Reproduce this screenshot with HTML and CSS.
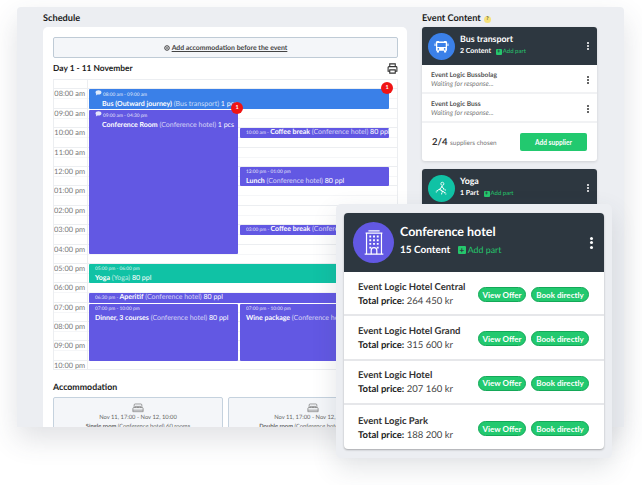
FILE: index.html
```html
<!DOCTYPE html>
<html lang="en">
  <head>
    <meta charset="UTF-8" />
    <meta name="viewport" content="width=device-width, initial-scale=1.0" />
    <title>Event schedule</title>
    <link rel="stylesheet" href="styles.css">
  </head>
  <body>
    <div class="frame">
      <div class="left-col">
        <h2 class="col-title">Schedule</h2>
        <div class="panel">
          <div class="add-box">
            <svg class="add-icon" viewBox="0 0 10 10"><circle cx="5" cy="5" r="3.8" fill="none" stroke="#333" stroke-width="1.6"/><path d="M5 3.4v3.2M3.4 5h3.2" stroke="#333" stroke-width="1"/></svg>
            <span>Add accommodation before the event</span>
          </div>
          <div class="day-row">
            <h3>Day 1 - 11 November</h3>
            <svg class="print-icon" viewBox="0 0 12 12"><path d="M3 4V1h6v3M3 9H1.2V5a1 1 0 0 1 1-1h7.6a1 1 0 0 1 1 1v4H9M3 7.5h6V11H3z" fill="none" stroke="#333" stroke-width="1.2"/></svg>
          </div>

          <div class="calendar">
            <div class="cal-top"></div>
            <div class="hour"><span>08:00 am</span></div>
            <div class="hour"><span>09:00 am</span></div>
            <div class="hour"><span>10:00 am</span></div>
            <div class="hour"><span>11:00 am</span></div>
            <div class="hour"><span>12:00 pm</span></div>
            <div class="hour"><span>01:00 pm</span></div>
            <div class="hour"><span>02:00 pm</span></div>
            <div class="hour"><span>03:00 pm</span></div>
            <div class="hour"><span>04:00 pm</span></div>
            <div class="hour"><span>05:00 pm</span></div>
            <div class="hour"><span>06:00 pm</span></div>
            <div class="hour"><span>07:00 pm</span></div>
            <div class="hour"><span>08:00 pm</span></div>
            <div class="hour"><span>09:00 pm</span></div>
            <div class="hour last"><span>10:00 pm</span></div>

            <div class="events">
              <div class="event blue ev-bus">
                <p class="ev-time"><svg class="chat" viewBox="0 0 10 9"><path d="M5 .5c2.6 0 4.500 1.400 4.500 3.200S7.600 6.900 5 6.900c-.5 0-1 0-1.400-.2L1 8.300l.7-2.300C1 5.400.5 4.600.5 3.700.5 1.900 2.400.5 5 .5z" fill="#fff"/></svg>08:00 am - 09:00 am</p>
                <p class="ev-name indent"><b>Bus (Outward journey)</b> <i>(Bus transport)</i> 1 pcs</p>
              </div>
              <div class="event purple ev-room">
                <p class="ev-time"><svg class="chat" viewBox="0 0 10 9"><path d="M5 .5c2.6 0 4.500 1.400 4.500 3.200S7.600 6.900 5 6.900c-.5 0-1 0-1.400-.2L1 8.300l.7-2.300C1 5.400.5 4.600.5 3.700.5 1.900 2.400.5 5 .5z" fill="#fff"/></svg>09:00 am - 04:30 pm</p>
                <p class="ev-name indent"><b>Conference Room</b> <i>(Conference hotel)</i> 1 pcs</p>
              </div>
              <div class="event purple one-line ev-coffee1">
                <span class="ev-time">10:00 am - </span><b>Coffee break</b> <i>(Conference hotel)</i> 80 ppl
              </div>
              <div class="event purple ev-lunch">
                <p class="ev-time">12:00 pm - 01:00 pm</p>
                <p class="ev-name"><b>Lunch</b> <i>(Conference hotel)</i> 80 ppl</p>
              </div>
              <div class="event purple one-line ev-coffee2">
                <span class="ev-time">03:00 pm - </span><b>Coffee break</b> <i>(Conference hotel)</i> 80 ppl
              </div>
              <div class="event teal ev-yoga">
                <p class="ev-time">05:00 pm - 06:00 pm</p>
                <p class="ev-name"><b>Yoga</b> <i>(Yoga)</i> 80 ppl</p>
              </div>
              <div class="event purple one-line ev-aperitif">
                <span class="ev-time">06:30 pm - </span><b>Aperitif</b> <i>(Conference hotel)</i> 80 ppl
              </div>
              <div class="event purple ev-dinner">
                <p class="ev-time">07:00 pm - 10:00 pm</p>
                <p class="ev-name"><b>Dinner, 3 courses</b> <i>(Conference hotel)</i> 80 ppl</p>
              </div>
              <div class="event purple ev-wine">
                <p class="ev-time">07:00 pm - 10:00 pm</p>
                <p class="ev-name"><b>Wine package</b> <i>(Conference hotel)</i> 80 ppl</p>
              </div>
            </div>
            <span class="badge badge-bus">1</span>
            <span class="badge badge-room">1</span>
          </div>

          <h3 class="acc-title">Accommodation</h3>
          <div class="acc-row">
            <div class="acc-card">
              <svg class="bed" viewBox="0 0 14 11"><path d="M2.5 5V2a1.200 1.200 0 0 1 1.200-1.200h6.600A1.200 1.200 0 0 1 11.500 2v3M1 8V6.200A1.200 1.200 0 0 1 2.200 5h9.600A1.200 1.200 0 0 1 13 6.200V8M1 8h12v1.800H1zM4 5V3.600h2.500V5M7.500 5V3.600H10V5" fill="none" stroke="#666" stroke-width=".7"/></svg>
              <p>Nov 11, 17:00 - Nov 12, 10:00</p>
              <p><b>Single room</b> (Conference hotel) 60 rooms</p>
            </div>
            <div class="acc-card">
              <svg class="bed" viewBox="0 0 14 11"><path d="M2.5 5V2a1.200 1.200 0 0 1 1.200-1.200h6.600A1.200 1.200 0 0 1 11.500 2v3M1 8V6.200A1.200 1.200 0 0 1 2.200 5h9.600A1.200 1.200 0 0 1 13 6.200V8M1 8h12v1.800H1zM4 5V3.600h2.500V5M7.500 5V3.600H10V5" fill="none" stroke="#666" stroke-width=".7"/></svg>
              <p>Nov 11, 17:00 - Nov 12, 10:00</p>
              <p><b>Double room</b> (Conference hotel) 20 rooms</p>
            </div>
          </div>
        </div>
      </div>

      <div class="right-col">
        <h2 class="col-title">Event Content <span class="hint">?</span></h2>
        <div class="content-card">
          <div class="card-head">
            <div class="avatar av-blue">
              <svg viewBox="0 0 20 20" class="av-icon"><path d="M5 3.500h10a1.500 1.500 0 0 1 1.500 1.500v10H3.500V5A1.500 1.500 0 0 1 5 3.500z" fill="#fff"/><path d="M5 6h10v4.500H5z" fill="#3b80e8"/><path d="M7 3.800h6" stroke="#3b80e8" stroke-width=".8"/><circle cx="6.300" cy="12.800" r="1" fill="#3b80e8"/><circle cx="13.700" cy="12.800" r="1" fill="#3b80e8"/><path d="M4.500 15h2.500v2H4.500zM13 15h2.500v2H13zM1.800 6.500h1.200v3H1.800zM17 6.500h1.200v3H17z" fill="#fff"/></svg>
            </div>
            <div class="head-text">
              <p class="head-name">Bus transport</p>
              <p class="head-sub"><b>2 Content</b> <span class="add-part"><span class="plus">+</span>Add part</span></p>
            </div>
            <span class="dots"><i></i><i></i><i></i></span>
          </div>
          <div class="supplier">
            <div>
              <p class="sup-name">Event Logic Bussbolag</p>
              <p class="sup-state">Waiting for response...</p>
            </div>
            <span class="dots dark"><i></i><i></i><i></i></span>
          </div>
          <div class="supplier">
            <div>
              <p class="sup-name">Event Logic Buss</p>
              <p class="sup-state">Waiting for response...</p>
            </div>
            <span class="dots dark"><i></i><i></i><i></i></span>
          </div>
          <div class="card-foot">
            <p><b>2/4</b> suppliers chosen</p>
            <button class="add-supplier">Add supplier</button>
          </div>
        </div>
        <div class="content-card">
          <div class="card-head">
            <div class="avatar av-teal">
              <svg viewBox="0 0 20 20" class="av-icon"><circle cx="11" cy="4.500" r="1.800" fill="none" stroke="#fff" stroke-width="1"/><path d="M10.500 7.500 8 11l3 2-1 4M10.500 7.500l2.500 3.500 2 1M8 11l-3 1.500-1.500 2M11 13l3 2 1.500 2" fill="none" stroke="#fff" stroke-width="1.300" stroke-dasharray="2 .6"/></svg>
            </div>
            <div class="head-text">
              <p class="head-name">Yoga</p>
              <p class="head-sub"><b>1 Part</b> <span class="add-part"><span class="plus">+</span>Add part</span></p>
            </div>
            <span class="dots"><i></i><i></i><i></i></span>
          </div>
        </div>
      </div>
    </div>

    <div class="overlay">
      <div class="hotel-card">
        <div class="hotel-head">
          <div class="hotel-avatar">
            <svg viewBox="0 0 24 30" class="hotel-icon"><path d="M4 27V4.500h16V27zM2 27h20M3 4.500h18M6 2h12" fill="none" stroke="#fff" stroke-width="1.300"/><path d="M7 7h2v2H7zM11 7h2v2h-2zM15 7h2v2h-2zM7 11h2v2H7zM11 11h2v2h-2zM15 11h2v2h-2zM7 15h2v2H7zM11 15h2v2h-2zM15 15h2v2h-2zM7 19h2v2H7zM15 19h2v2h-2z" fill="#fff"/><path d="M9 27v-4a3 3 0 0 1 6 0v4" fill="none" stroke="#fff" stroke-width="1.300"/></svg>
          </div>
          <div class="hotel-text">
            <p class="hotel-name">Conference hotel</p>
            <p class="hotel-sub"><b>15 Content</b> <span class="add-part"><span class="plus">+</span>Add part</span></p>
          </div>
          <span class="dots big"><i></i><i></i><i></i></span>
        </div>
        <div class="offer">
          <div class="offer-info">
            <p class="offer-name">Event Logic Hotel Central</p>
            <p class="offer-price"><b>Total price:</b> 264 450 kr</p>
          </div>
          <button class="pill">View Offer</button>
          <button class="pill wide">Book directly</button>
        </div>
        <div class="offer">
          <div class="offer-info">
            <p class="offer-name">Event Logic Hotel Grand</p>
            <p class="offer-price"><b>Total price:</b> 315 600 kr</p>
          </div>
          <button class="pill">View Offer</button>
          <button class="pill wide">Book directly</button>
        </div>
        <div class="offer">
          <div class="offer-info">
            <p class="offer-name">Event Logic Hotel</p>
            <p class="offer-price"><b>Total price:</b> 207 160 kr</p>
          </div>
          <button class="pill">View Offer</button>
          <button class="pill wide">Book directly</button>
        </div>
        <div class="offer">
          <div class="offer-info">
            <p class="offer-name">Event Logic Park</p>
            <p class="offer-price"><b>Total price:</b> 188 200 kr</p>
          </div>
          <button class="pill">View Offer</button>
          <button class="pill wide">Book directly</button>
        </div>
      </div>
    </div>
  </body>
</html>
```

FILE: styles.css
```css
body {
  margin: 0;
  width: 642px;
  height: 485px;
  position: relative;
  overflow: hidden;
  background: #fff;
  font-family: "Lato", "Open Sans", sans-serif;
  text-rendering: geometricPrecision;
  color: #222;
}

p,
h2,
h3 {
  margin: 0;
}

.frame {
  display: flex;
  gap: 15px;
  box-sizing: border-box;
  width: 607px;
  height: 420px;
  margin: 7px 0 0 17px;
  padding: 4px 0 0 26px;
  overflow: hidden;
  background: #eceef2;
  border-radius: 4px 4px 0 0;
  box-shadow: 0 12px 28px rgba(60, 70, 85, 0.16);
}

.left-col {
  width: 364px;
  flex-shrink: 0;
}

.right-col {
  width: 175px;
  flex-shrink: 0;
}

.col-title {
  height: 16px;
  font-size: 9.2px;
  line-height: 13px;
  font-weight: 700;
  color: #1c1c1c;
}

.hint {
  display: inline-block;
  width: 7px;
  height: 7px;
  margin-left: 1px;
  line-height: 7px;
  border-radius: 50%;
  background: #f6e27a;
  color: #444;
  font-size: 5px;
  text-align: center;
  vertical-align: 1px;
}

.panel {
  box-sizing: border-box;
  height: 420px;
  padding: 10px 9px 0 10px;
  background: #fff;
  border-radius: 5px;
}

.add-box {
  display: flex;
  align-items: center;
  justify-content: center;
  gap: 2px;
  height: 21px;
  box-sizing: border-box;
  background: #f4f6f9;
  border: 1px solid #bfcbd6;
  border-radius: 2px;
  font-size: 6.9px;
  font-weight: 700;
  color: #444;
  text-decoration: underline;
}

.add-icon {
  width: 6px;
  height: 6px;
}

.day-row {
  display: flex;
  align-items: center;
  justify-content: space-between;
  height: 20.7px;
}

.day-row h3 {
  font-size: 8.4px;
  font-weight: 700;
  color: #1c1c1c;
}

.print-icon {
  width: 11px;
  height: 11px;
}

.calendar {
  position: relative;
  border: 1px solid #eceef1;
  box-sizing: border-box;
  height: 291px;
  overflow: hidden;
}

.cal-top {
  height: 8.7px;
  margin-left: 33px;
  border-left: 1px solid #eceef1;
}

.hour {
  position: relative;
  box-sizing: border-box;
  height: 19.4px;
  border-top: 1px solid #eceef1;
  background: linear-gradient(#f5f6f8, #f5f6f8) 0 9px / 100% 1px no-repeat;
}

.hour::before {
  content: "";
  position: absolute;
  left: 33px;
  top: -1px;
  bottom: 0;
  border-left: 1px solid #eceef1;
}

.hour.last {
  height: 10px;
  background: none;
}

.hour span {
  display: block;
  width: 31px;
  padding-top: 1px;
  text-align: right;
  font-size: 7.4px;
  line-height: 8px;
  color: #777;
  white-space: nowrap;
}

.events {
  position: absolute;
  top: 0;
  left: 35px;
  width: 300px;
  display: grid;
  grid-template-columns: 149px 149px;
  column-gap: 2px;
  grid-auto-rows: 9.7px;
}

.event {
  overflow: hidden;
  box-sizing: border-box;
  padding: 1px 0 0 6px;
  color: #fff;
  font-size: 7px;
  white-space: nowrap;
  border-radius: 1px;
}

.event i {
  font-style: normal;
  opacity: 0.72;
}

.blue {
  background: #3a80e8;
}

.purple {
  background: #6258e3;
}

.teal {
  background: #10c2a5;
}

.ev-time {
  font-size: 4.8px;
  line-height: 8px;
  opacity: 0.85;
}

.ev-name {
  line-height: 11px;
}

.ev-name.indent {
  padding-left: 7px;
}

.chat {
  width: 7px;
  height: 6px;
  margin-right: 1px;
}

.one-line {
  padding-top: 0;
  line-height: 9px;
}

.ev-bus {
  grid-column: 1 / 3;
  grid-row: 2 / 4;
}

.ev-room {
  grid-column: 1;
  grid-row: 4 / 19;
  margin-top: 1px;
}

.ev-coffee1 {
  grid-column: 2;
  grid-row: 6 / 7;
}

.ev-lunch {
  grid-column: 2;
  grid-row: 10 / 12;
}

.ev-coffee2 {
  grid-column: 2;
  grid-row: 16 / 17;
}

.ev-yoga {
  grid-column: 1 / 3;
  grid-row: 20 / 22;
}

.ev-aperitif {
  grid-column: 1 / 3;
  grid-row: 23 / 24;
}

.ev-dinner {
  grid-column: 1;
  grid-row: 24 / 30;
  margin-top: 1px;
}

.ev-wine {
  grid-column: 2;
  grid-row: 24 / 30;
  margin-top: 1px;
}

.badge {
  position: absolute;
  width: 12px;
  height: 12px;
  border-radius: 50%;
  background: #f01414;
  color: #fff;
  font-size: 5.5px;
  font-weight: 700;
  line-height: 12px;
  text-align: center;
}

.badge-bus {
  top: 2px;
  left: 327px;
}

.badge-room {
  top: 22px;
  left: 177px;
}

.acc-title {
  margin-top: 11px;
  font-size: 8.8px;
  line-height: 12px;
  font-weight: 700;
  color: #1c1c1c;
}

.acc-row {
  display: flex;
  gap: 5px;
  margin-top: 4px;
}

.acc-card {
  box-sizing: border-box;
  width: 170px;
  height: 60px;
  padding-top: 5px;
  background: #f4f6f9;
  border: 1px solid #c5d2de;
  border-radius: 2px;
  text-align: center;
  font-size: 5.8px;
  line-height: 9.5px;
  color: #666;
  white-space: nowrap;
}

.bed {
  display: block;
  width: 12px;
  height: 10px;
  margin: 0 auto;
}

.content-card {
  margin-bottom: 8px;
  background: #fff;
  border-radius: 3px;
  overflow: hidden;
  box-shadow: 0 1px 3px rgba(0, 0, 0, 0.12);
}

.card-head {
  display: flex;
  align-items: center;
  gap: 5px;
  height: 38px;
  padding: 0 8px 0 6px;
  background: #2d3740;
  color: #fff;
}

.avatar {
  display: flex;
  align-items: center;
  justify-content: center;
  width: 27px;
  height: 27px;
  border-radius: 50%;
}

.av-blue {
  background: #3b80e8;
}

.av-teal {
  background: #10c2a5;
}

.av-icon {
  width: 17px;
  height: 17px;
}

.head-text {
  flex: 1;
  margin-top: -3px;
}

.head-name {
  font-size: 8.8px;
  line-height: 14px;
  font-weight: 700;
}

.head-sub {
  font-size: 7px;
  line-height: 11px;
}

.add-part {
  margin-left: 3px;
  color: #25c76c;
  font-size: 6px;
  font-weight: 400;
}

.plus {
  display: inline-block;
  width: 6px;
  height: 6px;
  margin-right: 1px;
  border-radius: 1px;
  background: #25c76c;
  color: #2d3740;
  font-size: 6px;
  font-weight: 900;
  line-height: 6px;
  text-align: center;
}

.dots {
  display: flex;
  flex-direction: column;
  gap: 1px;
}

.dots i {
  width: 2px;
  height: 2px;
  border-radius: 50%;
  background: #fff;
}

.dots.dark i {
  background: #333;
}

.dots.big {
  gap: 1.5px;
}

.dots.big i {
  width: 3px;
  height: 3px;
}

.supplier {
  display: flex;
  align-items: center;
  justify-content: space-between;
  box-sizing: border-box;
  height: 29px;
  padding: 2px 8px 0 9px;
  border-bottom: 2px solid #f1f2f4;
}

.sup-name {
  font-size: 6.7px;
  line-height: 9px;
  font-weight: 700;
  color: #555;
}

.sup-state {
  font-size: 6.8px;
  line-height: 9px;
  font-style: italic;
  color: #777;
}

.card-foot {
  display: flex;
  align-items: center;
  justify-content: space-between;
  height: 38px;
  padding: 0 10px;
}

.card-foot p {
  font-size: 6.4px;
  color: #777;
}

.card-foot b {
  margin-right: 1px;
  font-size: 9.5px;
  color: #333;
}

.add-supplier {
  width: 67px;
  height: 18px;
  padding: 0;
  background: #22c96f;
  border: 0;
  border-radius: 2px;
  color: #fff;
  font-family: inherit;
  font-size: 6.6px;
  font-weight: 700;
}

.overlay {
  position: absolute;
  left: 336px;
  top: 204px;
  width: 276px;
  height: 254px;
  box-sizing: border-box;
  padding: 9px 8px 0 8px;
  background: #eceef2;
  border-radius: 5px;
  box-shadow: 0 10px 26px rgba(60, 70, 85, 0.14);
}

.hotel-card {
  background: #fff;
  border-radius: 4px;
  overflow: hidden;
  box-shadow: 0 1px 2px rgba(0, 0, 0, 0.3);
}

.hotel-head {
  display: flex;
  align-items: center;
  gap: 6px;
  height: 59px;
  padding: 0 11px 0 9px;
  background: #2d3740;
  color: #fff;
}

.hotel-avatar {
  display: flex;
  align-items: center;
  justify-content: center;
  width: 41px;
  height: 41px;
  border-radius: 50%;
  background: #6258e3;
}

.hotel-icon {
  width: 24px;
  height: 28px;
}

.hotel-text {
  flex: 1;
  margin-top: -5px;
}

.hotel-name {
  font-size: 12.5px;
  line-height: 19px;
  font-weight: 700;
}

.hotel-sub {
  font-size: 10px;
  line-height: 17px;
}

.hotel-sub .add-part {
  margin-left: 5px;
  font-size: 8.8px;
}

.hotel-sub .plus {
  width: 8px;
  height: 8px;
  margin-right: 2px;
  font-size: 8px;
  line-height: 8px;
}

.offer {
  display: flex;
  align-items: center;
  gap: 5px;
  box-sizing: border-box;
  height: 44.3px;
  padding: 3px 15px 0 14px;
  border-bottom: 2px solid #e6e7ea;
}

.offer:last-child {
  border-bottom: 0;
}

.offer-info {
  flex: 1;
  white-space: nowrap;
}

.offer-name {
  font-size: 9.5px;
  line-height: 14px;
  font-weight: 700;
  color: #333;
}

.offer-price {
  font-size: 9.5px;
  line-height: 14px;
  color: #444;
}

.offer-price b {
  color: #222;
}

.pill {
  flex-shrink: 0;
  width: 48px;
  height: 15px;
  padding: 0;
  background: #22c96f;
  border: 1px solid #14a858;
  border-radius: 8px;
  color: #fff;
  font-family: inherit;
  font-size: 8px;
  font-weight: 700;
  line-height: 12px;
  white-space: nowrap;
}

.pill.wide {
  width: 58px;
}
```
